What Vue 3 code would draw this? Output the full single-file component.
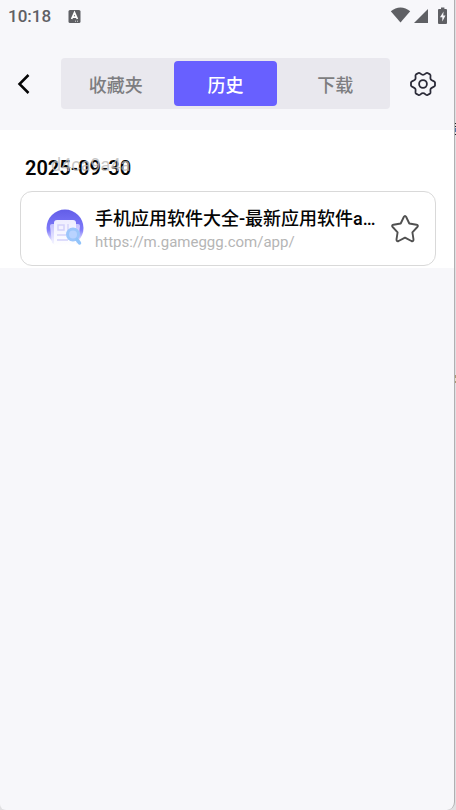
<script setup>
import { ref } from 'vue'

const tabs = ['收藏夹', '历史', '下载']
const active = ref('历史')
const starred = ref(false)
const entry = {
  title: '手机应用软件大全-最新应用软件app下载排行',
  url: 'https://m.gameggg.com/app/',
}
</script>

<template>
  <div class="desktop">
    <i class="mark mark-dark"></i>
    <i class="mark mark-gold"></i>
    <main class="phone">
      <div class="status">
        <span class="clock">10:18</span>
        <svg class="badge" viewBox="0 0 13 13" width="13" height="13">
          <rect x="0.5" y="0" width="12" height="13" rx="1.5" fill="#5f6064" />
          <path d="M3.6 9 6.500 2.600 9.400 9M4.600 7.200h4" fill="none" stroke="#fff" stroke-width="1.700" />
          <path d="M7 11.200h1M9 11.200h1" stroke="#ddd" stroke-width="1" />
        </svg>
        <svg class="signals" viewBox="0 0 58 18" width="58" height="18">
          <path d="M.8 4.200C6.500-.9 14.500-.9 20.200 4.200L10.500 15.500Z" fill="#5f6064" />
          <path d="M24 16 38 2V16Z" fill="#5f6064" />
          <path d="M51 .5h3.400v1.500H56q1 0 1 1V16q0 1-1 1h-7q-1 0-1-1V3q0-1 1-1h2Z" fill="#5f6064" />
          <path d="M53.600 4.500 50 10.200h2.300v4.300L55.500 8.500h-2.300Z" fill="#f7f7fa" />
        </svg>
      </div>

      <header class="bar">
        <button class="icon-btn" aria-label="返回">
          <svg viewBox="0 0 24 24" width="24" height="24">
            <path d="M16.500 3 7.500 12l9 9" fill="none" stroke="#050505" stroke-width="2.500" />
          </svg>
        </button>
        <nav class="tabs">
          <button
            v-for="tab in tabs"
            :key="tab"
            class="tab"
            :class="{ active: tab === active }"
            @click="active = tab"
          >{{ tab }}</button>
        </nav>
        <button class="icon-btn gear" aria-label="设置">
          <svg viewBox="0 0 28 28" width="28" height="28" fill="none" stroke="#2b2b38" stroke-width="1.800" stroke-linejoin="round">
            <path d="M9.500 3C11 2.200 11.700 4.800 14 4.800S17 2.200 18.500 3L21 4.400C22.500 5.400 20.600 7.300 21.700 9.200S25.600 10.800 26 12.500V15.500C25.600 17.200 22.800 16.900 21.700 18.800S22.500 22.600 21 23.600L18.500 25C17 25.800 16.300 23.200 14 23.200S11 25.800 9.500 25L7 23.600C5.500 22.600 7.400 20.700 6.300 18.800S2.400 17.200 2 15.500V12.500C2.400 10.800 5.200 11.100 6.300 9.200S5.500 5.400 7 4.400Z" />
            <circle cx="14" cy="14" r="3.900" />
          </svg>
        </button>
      </header>

      <section class="history">
        <h2 class="date">2025-09-30<span class="ghost">d4ca9a4a</span></h2>
        <article class="card">
          <svg class="logo" viewBox="0 0 40 40" width="40" height="40">
            <defs>
              <linearGradient id="disc" x1="0" y1="0" x2="0" y2="1">
                <stop offset="0" stop-color="#625de8" />
                <stop offset="0.550" stop-color="#7f7afa" />
                <stop offset="0.800" stop-color="#d8d6ff" />
                <stop offset="1" stop-color="#fff" />
              </linearGradient>
              <linearGradient id="sheet" x1="0" y1="0" x2="0" y2="1">
                <stop offset="0" stop-color="#eeedff" />
                <stop offset="1" stop-color="#fff" />
              </linearGradient>
              <linearGradient id="side" x1="0" y1="0" x2="0" y2="1">
                <stop offset="0" stop-color="#c3c0ff" />
                <stop offset="1" stop-color="#f7f7ff" />
              </linearGradient>
            </defs>
            <circle cx="20" cy="19" r="18.500" fill="url(#disc)" />
            <path d="M5 17q0-2 2-2h4v21L7 34Z" fill="url(#side)" />
            <path d="M28 15h5q2 0 2 2l-2 17-5 2Z" fill="url(#side)" />
            <rect x="9" y="11" width="22" height="26" rx="3" fill="url(#sheet)" />
            <rect x="13" y="16" width="6" height="5" fill="none" stroke="#d3d1fa" stroke-width="1.500" />
            <path d="M23 15v7M12 26h9M12 31h11" stroke="#dddcfb" stroke-width="2" />
            <circle cx="28" cy="25.500" r="5.500" fill="#b9d3ff" stroke="#9cc6fb" stroke-width="3" />
            <path d="m32 30.500 2.500 3.500" stroke="#92c4fa" stroke-width="3.500" stroke-linecap="round" />
          </svg>
          <a class="text" href="#">
            <span class="title">{{ entry.title }}</span>
            <span class="url">{{ entry.url }}</span>
          </a>
          <button class="star" aria-label="收藏" :aria-pressed="starred" @click="starred = !starred">
            <svg viewBox="0 0 30 30" width="30" height="30">
              <path d="M13.800 3Q15 .8 16.200 3L19.300 9.500 26.500 10.700Q28.800 11.300 27.300 13L22.400 18.300 23.500 25.400Q23.600 27.800 21.400 27L15 23.700 8.600 27Q6.400 27.800 6.500 25.400L7.600 18.300 2.700 13Q1.200 11.300 3.500 10.700L10.700 9.500Z" fill="none" stroke="#505050" stroke-width="1.900" stroke-linejoin="round" />
            </svg>
          </button>
        </article>
      </section>
    </main>
  </div>
</template>

<style>
body {
  background: #e4e4e4;
}
</style>

<style scoped>
.desktop {
  position: relative;
  display: flex;
  min-height: 100vh;
  padding-right: 1px;
  background: #e0e0e2;
  font-family: Roboto, "Noto Sans CJK SC", sans-serif;
}
.mark {
  position: absolute;
  right: 0;
  width: 1px;
}
.mark-dark {
  top: 123px;
  height: 12px;
  background: linear-gradient(#222 0 1px, #ddd 1px 3px, #222 3px 4px, #ddd 4px 5px, #5574a8 5px 9px, #ddd 9px 11px, #222 11px 12px);
}
.mark-gold {
  top: 375px;
  height: 8px;
  background: linear-gradient(#a99a78 0 3px, #e8e0c8 3px 6px, #a99a78 6px 8px);
}
.phone {
  flex: 1;
  min-width: 0;
  border-right: 1px solid #b0b0b2;
  border-radius: 0 0 8px 6px;
  background: #f7f7fa;
}
button {
  margin: 0;
  padding: 0;
  border: 0;
  background: none;
  font: inherit;
  cursor: pointer;
}
svg {
  display: block;
}
.status {
  display: flex;
  align-items: center;
  height: 32px;
  padding: 0 6px 0 8px;
}
.clock {
  color: #5f6064;
  font-size: 17px;
  font-weight: 500;
  line-height: 32px;
}
.badge {
  margin-left: 17px;
}
.signals {
  margin-left: auto;
}
.bar {
  display: flex;
  align-items: center;
  height: 98px;
  padding: 5px 17px 0 12px;
  box-sizing: border-box;
}
.tabs {
  display: flex;
  flex: 1;
  margin: 0 19px 0 25px;
  border-radius: 4px;
  background: #e9e8ee;
}
.tab {
  flex: 1;
  height: 45px;
  margin: 3px;
  border-radius: 4px;
  color: #7d7d80;
  font-size: 18px;
  font-weight: 500;
}
.tab.active {
  background: #6860ff;
  color: #fff;
}
.history {
  padding: 26px 18px 2px 20px;
  background: #fff;
}
.date {
  position: relative;
  margin: 0 0 11px;
  padding-left: 5px;
  color: #050505;
  font-size: 20px;
  font-weight: 600;
  line-height: 24px;
}
.ghost {
  position: absolute;
  top: -3px;
  left: 31px;
  color: rgba(185, 185, 185, 0.8);
  font-size: 18px;
  font-weight: 400;
}
.card {
  display: flex;
  align-items: center;
  height: 75px;
  padding: 0 15px 0 24px;
  border: 1px solid #d9d9d9;
  border-radius: 12px;
  box-sizing: border-box;
}
.logo {
  flex: none;
}
.text {
  flex: 1;
  min-width: 0;
  margin: 0 10px;
  text-decoration: none;
}
.title,
.url {
  display: block;
  overflow: hidden;
  text-overflow: ellipsis;
  white-space: nowrap;
}
.title {
  color: #050505;
  font-size: 18px;
  font-weight: 500;
  line-height: 26px;
}
.url {
  color: #b5b5b5;
  font-size: 15px;
  line-height: 20px;
}
.star {
  flex: none;
}
</style>
